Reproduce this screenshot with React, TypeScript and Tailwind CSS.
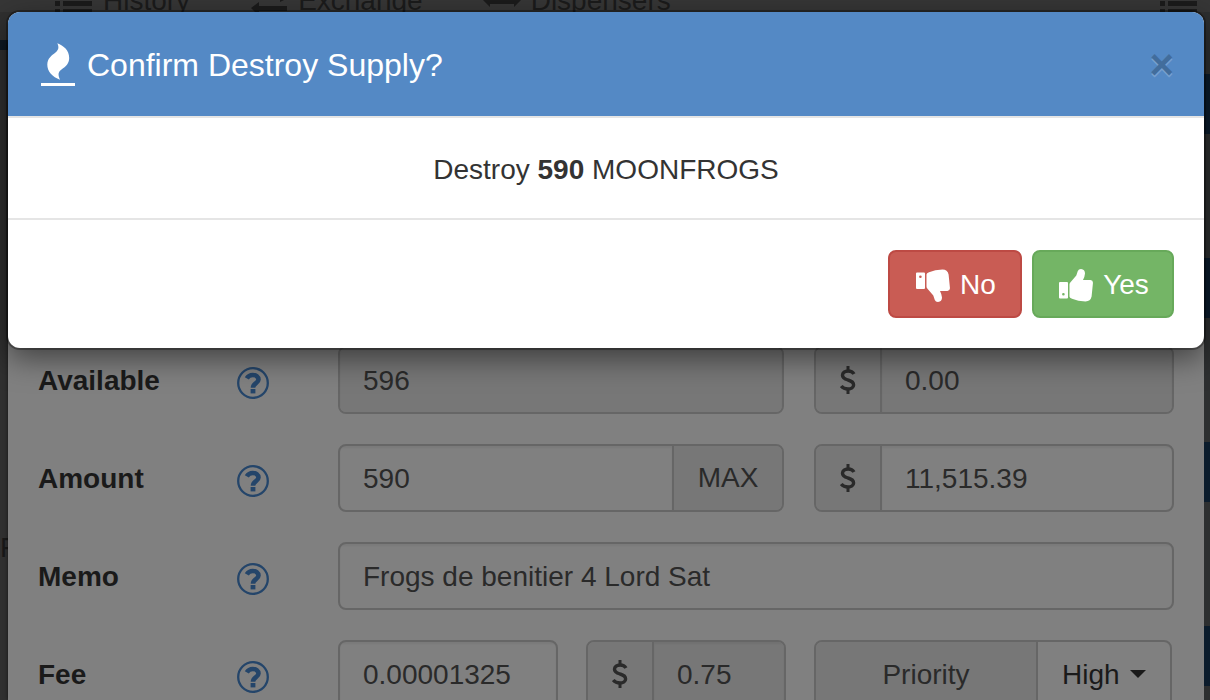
import { ReactNode } from "react";
import clsx from "clsx";

const FireIcon = () => (
  <svg className="w-[34px] h-11 shrink-0" viewBox="0 0 34 44" fill="currentColor" aria-hidden="true">
    <path d="M16.3 0.3C22.5 2.5 28.3 7.5 28.2 15C28.1 20.5 25 23.5 20.5 26.5C16.8 29.2 17 32 19 36.7C11.5 34 6.2 28.5 6.3 21.5C6.4 15.5 10.5 12.5 14.5 9.5C18 6.8 18 3.8 16.3 0.3Z" />
    <rect x="0" y="40" width="34" height="3" />
  </svg>
);

const ThumbIcon = ({ down = false }: { down?: boolean }) => (
  <svg className={clsx("w-[34px] h-[33px]", down && "-scale-y-100")} viewBox="0 0 34 33" fill="currentColor" aria-hidden="true">
    <path
      fillRule="evenodd"
      d="M1 13H8Q9 13 9 14V28.5Q9 29.5 8 29.5H1Q0 29.5 0 28.5V14Q0 13 1 13ZM4.4 24A1.3 1.3 0 1 0 4.4 26.6A1.3 1.3 0 1 0 4.4 24Z"
    />
    <path d="M10.5 15.5Q10.5 14.3 11.5 13.3L17.3 6.5L18.8 2Q19.6 0 22 0Q26 0.4 26 4.5Q25.8 7.5 24 11H31.5Q34.4 11.4 33.9 14.5L32.6 27.5Q31.5 32.4 26.5 32.4Q19 32.3 13 29.8Q10.5 29 10.5 27.5Z" />
  </svg>
);

const HelpIcon = () => (
  <svg className="w-8 h-8" viewBox="0 0 32 32" fill="none" stroke="currentColor" aria-hidden="true">
    <circle cx="16" cy="16" r="14.8" strokeWidth="2.3" />
    <path d="M9.8 11.4C11.2 9 13.1 8 15.8 8C19.1 8 21.5 10 21.5 12.4C21.5 16.2 16 16 16 20.8" strokeWidth="4.6" />
    <rect x="13.6" y="22" width="4.8" height="4.4" fill="currentColor" stroke="none" />
  </svg>
);

const DollarIcon = () => (
  <svg className="w-4 h-7" viewBox="0 0 16 28" fill="none" stroke="currentColor" aria-hidden="true">
    <path d="M14 8C12.8 6 10.8 5 8.2 5C4.8 5 2.5 6.8 2.5 9.3C2.5 12 4.8 13 8 14C11.5 15 13.6 16.2 13.6 18.9C13.6 21.5 11.2 23 8 23C5 23 2.8 22 1.2 20" strokeWidth="3.4" />
    <path d="M8 0V4M8 24V28" strokeWidth="3" />
  </svg>
);

const ListIcon = () => (
  <svg className="w-[38px] h-3" viewBox="0 0 38 12" fill="currentColor" aria-hidden="true">
    <path d="M0 1H5V6H0ZM8 1H37V6H8ZM0 9H5V12H0ZM8 9H37V12H8Z" />
  </svg>
);

const ExchangeIcon = () => (
  <svg className="w-[38px] h-3" viewBox="0 0 38 12" fill="currentColor" aria-hidden="true">
    <path d="M1 8L9 2V6H37V11H9V12H5ZM30 2V0H34Z" />
  </svg>
);

const DispenserIcon = () => (
  <svg className="w-[38px] h-3" viewBox="0 0 38 12" fill="currentColor" aria-hidden="true">
    <path d="M0 0H38L31 7V4H7V7Z" />
  </svg>
);

const NavItem = ({ icon, children }: { icon: ReactNode; children: ReactNode }) => (
  <a href="#" className="flex items-end gap-2.5 leading-[22px]">
    {icon}
    {children}
  </a>
);

const Row = ({ id, label, children }: { id: string; label: string; children: ReactNode }) => (
  <div className="flex items-center h-[68px]">
    <label htmlFor={id} className="w-[199px] pt-0.5 font-bold text-[#1a1a1a]">{label}</label>
    <div className="w-[101px]">
      <button type="button" aria-label={`Help: ${label}`} className="block mt-1.5 text-[#24456a]">
        <HelpIcon />
      </button>
    </div>
    {children}
  </div>
);

const Addon = ({ className, children }: { className?: string; children: ReactNode }) => (
  <span className={clsx("flex items-center justify-center shrink-0 bg-[#777777] border-[#666666]", className)}>
    {children}
  </span>
);

const Dollar = () => (
  <Addon className="w-[66px] border-r-2">
    <DollarIcon />
  </Addon>
);

const group = "flex h-[68px] min-w-0 overflow-hidden rounded-lg border-2 border-[#666666]";
const input = "flex-1 min-w-0 pl-[23px] pr-4 pt-0.5 outline-none shadow-[inset_0_2px_2px_rgba(0,0,0,0.05)]";

const barTops = ["Buy", "Sell", "Send", "Issue"];

export default function App() {
  return (
    <div className="relative flex flex-col h-screen overflow-hidden bg-[#303030] font-['Liberation_Sans',Arial,sans-serif] text-[28px] leading-10 text-[#2a2a2a]">
      <nav className="flex items-end justify-between h-3 shrink-0 overflow-hidden bg-[#363636] pl-[55px] pr-3 text-[#1b1b1b]">
        <div className="flex items-end gap-[60px]">
          <NavItem icon={<ListIcon />}>History</NavItem>
          <NavItem icon={<ExchangeIcon />}>Exchange</NavItem>
          <NavItem icon={<DispenserIcon />}>Dispensers</NavItem>
        </div>
        <ListIcon />
      </nav>

      <div className="flex flex-1 min-h-0">
        <aside className="w-2 shrink-0 overflow-hidden text-[#181818]">
          <div className="mt-7 h-2.5 bg-[#0d1925]" />
          <div className="mt-[478px]">F</div>
        </aside>

        <form className="flex flex-col gap-[30px] flex-1 min-w-0 mt-8 bg-[#808080] px-[30px] pt-[302px] shadow-[0_0_4px_rgba(0,0,0,0.6)]">
          <Row id="available" label="Available">
            <div className="grid grid-cols-[446fr_360fr] gap-[30px] flex-1">
              <div className={group}>
                <input id="available" readOnly value="596" className={clsx(input, "bg-[#777777]")} />
              </div>
              <div className={group}>
                <Dollar />
                <input aria-label="Available value" readOnly value="0.00" className={clsx(input, "bg-[#777777]")} />
              </div>
            </div>
          </Row>
          <Row id="amount" label="Amount">
            <div className="grid grid-cols-[446fr_360fr] gap-[30px] flex-1">
              <div className={group}>
                <input id="amount" defaultValue="590" className={input} />
                <button type="button" className="w-[110px] shrink-0 border-l-2 border-[#666666] bg-[#777777]">MAX</button>
              </div>
              <div className={group}>
                <Dollar />
                <input aria-label="Amount value" defaultValue="11,515.39" className={input} />
              </div>
            </div>
          </Row>
          <Row id="memo" label="Memo">
            <div className={clsx(group, "flex-1")}>
              <input id="memo" defaultValue="Frogs de benitier 4 Lord Sat" className={input} />
            </div>
          </Row>
          <Row id="fee" label="Fee">
            <div className="grid grid-cols-[220fr_200fr_358fr] gap-7 flex-1 pr-0.5">
              <div className={group}>
                <input id="fee" defaultValue="0.00001325" className={input} />
              </div>
              <div className={group}>
                <Dollar />
                <input aria-label="Fee value" readOnly value="0.75" className={clsx(input, "bg-[#777777]")} />
              </div>
              <div className={group}>
                <Addon className="flex-1 pt-0.5 border-r-2">
                  <label htmlFor="priority">Priority</label>
                </Addon>
                <div className="relative w-[132px] shrink-0 text-[#1a1a1a]">
                  <select id="priority" defaultValue="High" className="w-full h-full appearance-none pl-6 pt-0.5 outline-none">
                    <option>Low</option>
                    <option>Medium</option>
                    <option>High</option>
                  </select>
                  <svg className="pointer-events-none absolute right-6 top-7 w-4 h-2" viewBox="0 0 16 8" fill="currentColor" aria-hidden="true">
                    <path d="M0 0H16L8 8Z" />
                  </svg>
                </div>
              </div>
            </div>
          </Row>
        </form>

        <aside className="flex flex-col gap-[124px] w-1.5 shrink-0 pt-[62px] bg-[#2d2f30]">
          {barTops.map((name) => (
            <div key={name} className="h-[60px] shrink-0 bg-[#0b1c2c]" />
          ))}
        </aside>
      </div>

      {/* confirm dialog */}
      <div
        role="dialog"
        aria-labelledby="confirm-title"
        className="absolute inset-x-0 top-3 ml-2 mr-1.5 rounded-xl bg-white text-[#333333] shadow-[0_0_0_2px_rgba(0,0,0,0.3),0_10px_30px_rgba(0,0,0,0.5)]"
      >
        <header className="flex items-center justify-between h-[106px] pl-8 pr-[30px] pt-0.5 rounded-t-xl border-b-2 border-[#e5e5e5] bg-[#5489c5] bg-clip-padding text-white">
          <h4 id="confirm-title" className="flex items-center gap-3 pl-px text-[32px]">
            <FireIcon />
            Confirm Destroy Supply?
          </h4>
          <button
            type="button"
            aria-label="Close"
            className="text-[42px] font-bold text-black opacity-20 [text-shadow:0_2px_0_#fff]"
          >
            ×
          </button>
        </header>
        <p className="pt-8 pb-7 text-center">
          Destroy <strong>590</strong> MOONFROGS
        </p>
        <footer className="flex justify-end gap-2.5 p-[30px] border-t-2 border-[#e5e5e5] text-white">
          <button type="button" className="flex items-center justify-center gap-2.5 w-[134px] h-[68px] pl-0.5 pt-0.5 rounded-lg border-2 border-[#bd4a44] bg-[#c95c54]">
            <ThumbIcon down />
            No
          </button>
          <button type="button" className="flex items-center justify-center gap-2.5 w-[142px] h-[68px] pl-0.5 pt-0.5 rounded-lg border-2 border-[#67a95a] bg-[#74b566]">
            <ThumbIcon />
            Yes
          </button>
        </footer>
      </div>
    </div>
  );
}
